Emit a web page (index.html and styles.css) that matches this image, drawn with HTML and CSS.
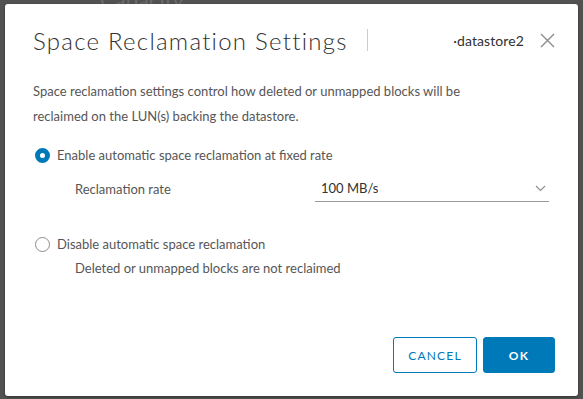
FILE: index.html
```html
<!DOCTYPE html>
<html lang="en">
<head>
    <meta charset="UTF-8">
    <title>Space Reclamation Settings</title>
    <link rel="stylesheet" href="styles.css">
</head>
<body>
    <div class="backdrop">
        <span class="behind-title">Capacity</span>
    </div>
    <div class="modal">
        <div class="modal-header">
            <h1 class="modal-title">Space Reclamation Settings</h1>
            <span class="divider"></span>
            <span class="object-name">·datastore2</span>
            <button class="close" aria-label="Close">
                <svg width="15" height="15" viewBox="0 0 15 15">
                    <path d="M1 1 L14 14 M14 1 L1 14" stroke="#8c8c8c" stroke-width="1.4" fill="none"/>
                </svg>
            </button>
        </div>
        <div class="modal-body">
            <p class="intro">Space reclamation settings control how deleted or unmapped blocks will be reclaimed on the LUN(s) backing the datastore.</p>
            <label class="radio checked">
                <span class="dot"></span>
                Enable automatic space reclamation at fixed rate
            </label>
            <div class="rate-row">
                <span class="rate-label">Reclamation rate</span>
                <div class="select">
                    <span>100 MB/s</span>
                    <svg width="11" height="7" viewBox="0 0 11 7">
                        <path d="M1 1 L5.5 5.5 L10 1" stroke="#8c8c8c" stroke-width="1.1" fill="none"/>
                    </svg>
                </div>
            </div>
            <label class="radio second">
                <span class="dot"></span>
                Disable automatic space reclamation
            </label>
            <p class="hint">Deleted or unmapped blocks are not reclaimed</p>
        </div>
        <div class="modal-footer">
            <button class="btn btn-outline">CANCEL</button>
            <button class="btn btn-primary">OK</button>
        </div>
    </div>
</body>
</html>
```

FILE: styles.css
```css
body {
    margin: 0;
    width: 583px;
    height: 399px;
    overflow: hidden;
    background-color: #525252;
    font-family: "Lato", "Open Sans", sans-serif;
    position: relative;
}
.backdrop {
    position: absolute;
    top: 0;
    left: 0;
    right: 0;
    height: 4px;
}
.behind-title {
    position: absolute;
    left: 100px;
    top: -14px;
    font-size: 22px;
    color: #6a6a6a;
}
.modal {
    position: relative;
    margin: 4px 5px 0 5px;
    width: 573px;
    height: 392px;
    background: #fff;
    border-radius: 3px;
    box-shadow: 0 1px 3px rgba(0, 0, 0, 0.4);
    display: flex;
    flex-direction: column;
}
.modal-header {
    display: flex;
    align-items: center;
    padding: 21px 23px 0 28px;
    height: 30px;
}
.modal-title {
    margin: 0;
    font-size: 24px;
    font-weight: 300;
    color: #313131;
    letter-spacing: 1.25px;
}
.divider {
    width: 1px;
    height: 22px;
    background: #cccccc;
    margin-left: 19px;
}
.object-name {
    margin-left: auto;
    font-size: 14px;
    color: #313131;
    letter-spacing: 0.1px;
}
.close {
    border: 0;
    background: none;
    padding: 0;
    margin-left: 16px;
    width: 15px;
    height: 15px;
    display: flex;
}
.modal-body {
    padding: 0 29px 0 28px;
    color: #565656;
    font-size: 13px;
}
.intro {
    margin: 24px 0 0 0;
    line-height: 25px;
    width: 480px;
}
.radio {
    display: flex;
    align-items: center;
    gap: 7px;
    margin-top: 18px;
    color: #565656;
}
.radio.second {
    margin-top: 34px;
}
.dot {
    width: 15px;
    height: 15px;
    border: 1px solid #8c8c8c;
    border-radius: 50%;
    box-sizing: border-box;
    margin-left: 2px;
}
.radio.checked .dot {
    border: 5px solid #0079b8;
    background: #fff;
}
.rate-row {
    display: flex;
    align-items: center;
    margin: 13px 0 0 42px;
}
.rate-label {
    width: 240px;
}
.select {
    width: 234px;
    box-sizing: border-box;
    display: flex;
    justify-content: space-between;
    align-items: center;
    padding: 4px 3px 5px 6px;
    border-bottom: 1px solid #9a9a9a;
    color: #313131;
}
.hint {
    margin: 8px 0 0 42px;
}
.modal-footer {
    margin-top: auto;
    display: flex;
    justify-content: flex-end;
    gap: 6px;
    padding: 0 23px 23px 0;
}
.btn {
    height: 36px;
    border-radius: 3px;
    font-family: "Lato", sans-serif;
    font-size: 12px;
    letter-spacing: 1.2px;
    padding: 0 12px;
    cursor: pointer;
}
.btn-outline {
    width: 84px;
    background: #fff;
    color: #0079b8;
    border: 1px solid #0079b8;
}
.btn-primary {
    width: 72px;
    background: #0079b8;
    color: #fff;
    border: 1px solid #0079b8;
    font-weight: bold;
}
```
